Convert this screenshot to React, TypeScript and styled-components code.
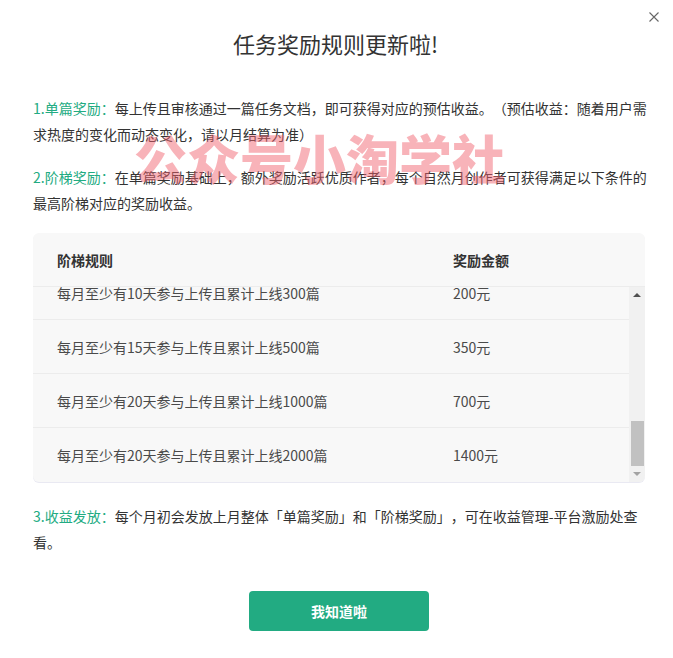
import React from "react";
import styled, { createGlobalStyle } from "styled-components";

const GlobalStyle = createGlobalStyle`
  html, body { margin: 0; padding: 0; background: #fff; }
  body {
    font-family: "Noto Sans CJK SC", "Noto Sans", sans-serif;
    color: #333;
    -webkit-font-smoothing: antialiased;
    text-spacing-trim: space-all;
  }
  * { box-sizing: border-box; }
`;

const Modal = styled.div`
  position: relative;
  width: 673px;
  height: 658px;
  background: #fff;
  padding: 28px 25px 0 33px;
  display: flex;
  flex-direction: column;
`;

const CloseButton = styled.button`
  position: absolute;
  top: 11px;
  right: 13px;
  width: 12px;
  height: 12px;
  padding: 0;
  border: 0;
  background: transparent;
  cursor: pointer;
  display: flex;
  align-items: center;
  justify-content: center;
`;

const Title = styled.h2`
  margin: 0 0 0 -10px;
  font-size: 22px;
  line-height: 30px;
  font-weight: 400;
  color: #333;
  text-align: center;
`;

const Paragraph = styled.p<{ $top: number }>`
  margin: ${(p) => p.$top}px 0 0;
  font-size: 14px;
  line-height: 26px;
  color: #333;
`;

const Label = styled.span`
  color: #22ab82;
`;

const Table = styled.div`
  margin-top: 17px;
  margin-right: 3px;
  height: 249px;
  background: #f8f8f8;
  border-radius: 6px;
  overflow: hidden;
  display: flex;
  flex-direction: column;
  box-shadow: 0 1px 0 #e9e9f2;
`;

const Columns = styled.div`
  display: grid;
  grid-template-columns: 420px 1fr;
  align-items: center;
`;

const HeaderRow = styled(Columns)`
  height: 54px;
  flex: none;
  border-bottom: 1px solid #ececec;
  font-size: 14px;
  font-weight: 700;
  color: #333;
`;

const Cell = styled.div<{ $first?: boolean }>`
  padding-left: ${(p) => (p.$first ? 24 : 0)}px;
  white-space: nowrap;
`;

const BodyWrap = styled.div`
  flex: 1;
  display: flex;
  min-height: 0;
`;

const Body = styled.div`
  flex: 1;
  overflow: hidden;
  display: flex;
  flex-direction: column;
  justify-content: flex-end;
`;

const Row = styled(Columns)<{ $last?: boolean }>`
  height: 54px;
  flex: none;
  font-size: 14px;
  color: #4a4a4a;
  border-bottom: ${(p) => (p.$last ? "none" : "1px solid #ececec")};
`;

const ScrollBar = styled.div`
  width: 16px;
  flex: none;
  background: #f1f1f1;
  display: flex;
  flex-direction: column;
`;

const ScrollArrow = styled.div<{ $down?: boolean }>`
  height: 16px;
  flex: none;
  display: flex;
  align-items: center;
  justify-content: center;
  &::before {
    content: "";
    width: 0;
    height: 0;
    border-left: 4px solid transparent;
    border-right: 4px solid transparent;
    ${(p) =>
      p.$down
        ? "border-top: 4px solid #a3a3a3;"
        : "border-bottom: 4px solid #505050;"}
  }
`;

const Track = styled.div`
  flex: 1;
  display: flex;
  flex-direction: column;
  justify-content: flex-end;
  padding: 0 1px 0 2px;
`;

const Thumb = styled.div`
  height: 45px;
  background: #c1c1c1;
`;

const Footer = styled.div`
  margin-top: 36px;
  margin-right: 3px;
  display: flex;
  justify-content: center;
`;

const PrimaryButton = styled.button`
  width: 180px;
  height: 40px;
  border: 0;
  border-radius: 4px;
  background: #22ab82;
  color: #fff;
  font-family: inherit;
  font-size: 14px;
  font-weight: 700;
  cursor: pointer;
`;

const Watermark = styled.div`
  position: absolute;
  left: 134px;
  top: 124px;
  font-size: 53px;
  line-height: 66px;
  font-weight: 900;
  color: rgba(240, 96, 108, 0.48);
  white-space: nowrap;
  pointer-events: none;
`;

const rows = [
  { rule: "每月至少有10天参与上传且累计上线300篇", amount: "200元" },
  { rule: "每月至少有15天参与上传且累计上线500篇", amount: "350元" },
  { rule: "每月至少有20天参与上传且累计上线1000篇", amount: "700元" },
  { rule: "每月至少有20天参与上传且累计上线2000篇", amount: "1400元" },
];

export default function App() {
  return (
    <>
      <GlobalStyle />
      <Modal>
        <CloseButton aria-label="关闭">
          <svg width="10" height="10" viewBox="0 0 10 10">
            <path d="M0.5 0.5 L9.5 9.5 M9.5 0.5 L0.5 9.5" stroke="#666" strokeWidth="1.1" fill="none" />
          </svg>
        </CloseButton>
        <Title>任务奖励规则更新啦!</Title>
        <Paragraph $top={37}>
          <Label>1.单篇奖励：</Label>
          每上传且审核通过一篇任务文档，即可获得对应的预估收益。（预估收益：随着用户需求热度的变化而动态变化，请以月结算为准）
        </Paragraph>
        <Paragraph $top={17}>
          <Label>2.阶梯奖励：</Label>
          在单篇奖励基础上，额外奖励活跃优质作者，每个自然月创作者可获得满足以下条件的最高阶梯对应的奖励收益。
        </Paragraph>
        <Table>
          <HeaderRow>
            <Cell $first>阶梯规则</Cell>
            <Cell>奖励金额</Cell>
          </HeaderRow>
          <BodyWrap>
            <Body>
              {rows.map((r, i) => (
                <Row key={r.rule} $last={i === rows.length - 1}>
                  <Cell $first>{r.rule}</Cell>
                  <Cell>{r.amount}</Cell>
                </Row>
              ))}
            </Body>
            <ScrollBar>
              <ScrollArrow />
              <Track>
                <Thumb />
              </Track>
              <ScrollArrow $down />
            </ScrollBar>
          </BodyWrap>
        </Table>
        <Paragraph $top={21}>
          <Label>3.收益发放：</Label>
          每个月初会发放上月整体「单篇奖励」和「阶梯奖励」，可在收益管理-平台激励处查看。
        </Paragraph>
        <Footer>
          <PrimaryButton>我知道啦</PrimaryButton>
        </Footer>
        <Watermark>公众号小淘学社</Watermark>
      </Modal>
    </>
  );
}
